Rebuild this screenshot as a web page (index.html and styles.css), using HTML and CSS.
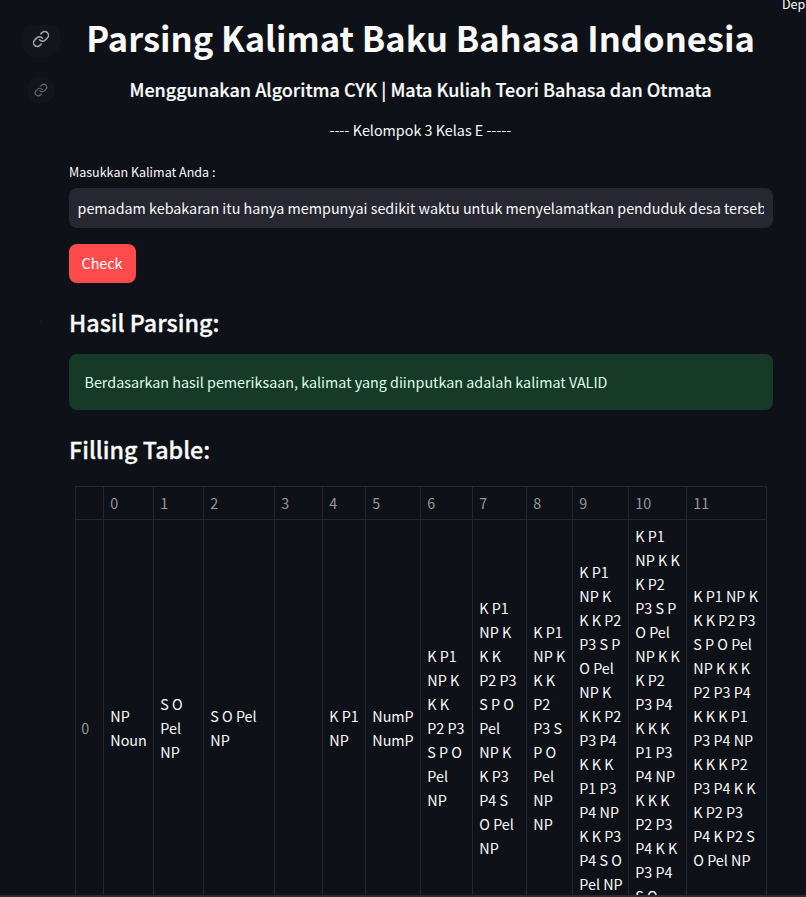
FILE: index.html
```html
<!DOCTYPE html>
<html lang="id">
<head>
<meta charset="utf-8">
<title>Parsing Kalimat Baku Bahasa Indonesia</title>
<link rel="stylesheet" href="styles.css">
</head>
<body>
<svg class="defs" width="0" height="0"><defs><symbol id="link" viewBox="0 0 24 24"><path d="M10 13a5 5 0 0 0 7.54.54l3-3a5 5 0 0 0-7.07-7.07l-1.72 1.71"/><path d="M14 11a5 5 0 0 0-7.54-.54l-3 3a5 5 0 0 0 7.07 7.07l1.71-1.71"/></symbol></defs></svg>
<div class="deploy">Dep</div>
<main>
<header class="row title-row"><span class="anchor large"><svg><use href="#link"/></svg></span><h1><span>Parsing Kalimat Baku Bahasa Indonesia</span></h1></header>
<div class="row sub-row"><span class="anchor small"><svg><use href="#link"/></svg></span><h4><span>Menggunakan Algoritma CYK | Mata Kuliah Teori Bahasa dan Otmata</span></h4></div>
<p class="group">---- Kelompok 3 Kelas E -----</p>
<label for="kalimat">Masukkan Kalimat Anda :</label>
<div class="field"><input id="kalimat" type="text" value="pemadam kebakaran itu hanya mempunyai sedikit waktu untuk menyelamatkan penduduk desa tersebut"></div>
<button type="button">Check</button>
<div class="row result-heading"><span class="anchor tiny"><svg><use href="#link"/></svg></span><h3>Hasil Parsing:</h3></div>
<div class="alert">Berdasarkan hasil pemeriksaan, kalimat yang diinputkan adalah kalimat VALID</div>
<h3 class="table-heading">Filling Table:</h3>
<table>
<colgroup><col class="c-index"><col class="c0"><col class="c1"><col class="c2"><col class="c3"><col class="c4"><col class="c5"><col class="c6"><col class="c7"><col class="c8"><col class="c9"><col class="c10"><col class="c11"></colgroup>
<thead><tr><th></th><th>0</th><th>1</th><th>2</th><th>3</th><th>4</th><th>5</th><th>6</th><th>7</th><th>8</th><th>9</th><th>10</th><th>11</th></tr></thead>
<tbody><tr>
<th>0</th>
<td>NP<br>Noun</td>
<td>S O<br>Pel<br>NP</td>
<td>S O Pel<br>NP</td>
<td></td>
<td>K P1<br>NP</td>
<td>NumP<br>NumP</td>
<td>K P1<br>NP K<br>K K<br>P2 P3<br>S P O<br>Pel<br>NP</td>
<td>K P1<br>NP K<br>K K<br>P2 P3<br>S P O<br>Pel<br>NP K<br>K P3<br>P4 S<br>O Pel<br>NP</td>
<td>K P1<br>NP K<br>K K<br>P2<br>P3 S<br>P O<br>Pel<br>NP<br>NP</td>
<td>K P1<br>NP K<br>K K P2<br>P3 S P<br>O Pel<br>NP K<br>K K P2<br>P3 P4<br>K K K<br>P1 P3<br>P4 NP<br>K K P3<br>P4 S O<br>Pel NP</td>
<td>K P1<br>NP K K<br>K P2<br>P3 S P<br>O Pel<br>NP K K<br>K P2<br>P3 P4<br>K K K<br>P1 P3<br>P4 NP<br>K K K<br>P2 P3<br>P4 K K<br>P3 P4<br>S O<br>Pel NP</td>
<td>K P1 NP K<br>K K P2 P3<br>S P O Pel<br>NP K K K<br>P2 P3 P4<br>K K K P1<br>P3 P4 NP<br>K K K P2<br>P3 P4 K K<br>K P2 P3<br>P4 K P2 S<br>O Pel NP</td>
</tr></tbody>
</table>
</main>
<footer></footer>
</body>
</html>
```
FILE: styles.css
```css
* { box-sizing: border-box; }
html { background: #0e1117; }
body {
  margin: 0;
  height: 897px;
  overflow: hidden;
  display: flex;
  flex-direction: column;
  position: relative;
  background: #0e1117;
  color: #fafafa;
  font-family: "Noto Sans CJK SC", "Noto Sans", sans-serif;
  font-size: 14.33px;
  line-height: 24px;
}
.defs { position: absolute; }
.deploy { position: absolute; left: 782px; top: -8px; font-size: 12.54px; }
main { height: 895px; overflow: hidden; padding: 0 33px 0 69px; }
footer { height: 2px; background: #2b2c31; }
.row { display: flex; align-items: center; margin-left: -48px; }
.row h1, .row h4 { flex: 1; margin: 0; text-align: center; white-space: nowrap; }
.title-row { height: 53px; margin-top: 12px; }
h1 { font-size: 34.5px; line-height: 51px; padding: 0 1px 2px 0; font-weight: 700; }
.sub-row { height: 24px; margin-top: 13px; }
h4 { font-size: 18px; line-height: 22px; padding: 0 1px 2px 0; font-weight: 500; -webkit-text-stroke: 0.2px #fafafa; }
.anchor {
  flex: none;
  display: flex;
  align-items: center;
  justify-content: center;
  border-radius: 50%;
  background: #12151b;
}
.anchor svg { fill: none; stroke: #a2a4a8; stroke-width: 2; stroke-linecap: round; stroke-linejoin: round; }
.large { width: 40px; height: 40px; margin-right: 8px; clip-path: inset(6px 0 0 0); }
.large svg { width: 18px; height: 18px; }
.small { width: 28px; height: 28px; margin: 0 14px 0 6px; }
.small svg { width: 14px; height: 14px; stroke: #66686d; }
.tiny { width: 4px; height: 4px; margin: 0 26px 0 18px; }
.tiny svg { width: 4px; height: 4px; stroke: #25282e; }
.group { margin: 16px 1px 0 0; text-align: center; }
label { display: block; margin-top: 20px; font-size: 12.54px; line-height: 20px; }
.field { height: 40px; margin-top: 6px; padding: 0 9px 0 8.5px; border-radius: 8px; background: #262730; }
input {
  display: block;
  width: 100%;
  height: 40px;
  padding: 0 0 2px;
  border: 0;
  outline: 0;
  background: transparent;
  color: #fafafa;
  font: inherit;
}
button {
  display: block;
  width: 67px;
  height: 39px;
  margin-top: 16px;
  padding: 0 1px 2px 0;
  border: 0;
  border-radius: 8px;
  background: #ff4b4b;
  color: #fff;
  font: inherit;
}
h3 { margin: 0; font-size: 23.3px; line-height: 34px; font-weight: 500; -webkit-text-stroke: 0.3px #fafafa; }
.result-heading { margin-top: 22px; }
.alert { height: 56px; margin-top: 15px; padding: 16px 16px 16px 15.5px; border-radius: 8px; background: #173928; color: #dffde9; }
.table-heading { margin-top: 22px; }
table {
  table-layout: fixed;
  width: 692px;
  margin: 20px 0 0 6px;
  border-spacing: 0;
  border: solid #26282d;
  border-width: 1px 0 0 1px;
}
.c-index { width: 28px; }
.c0, .c1 { width: 50px; }
.c2 { width: 71px; }
.c3 { width: 48px; }
.c4 { width: 43px; }
.c5 { width: 55px; }
.c6 { width: 52px; }
.c7 { width: 54px; }
.c8 { width: 46px; }
.c9 { width: 56px; }
.c10 { width: 58px; }
.c11 { width: 80px; }
th, td {
  padding: 4px 0 6px 6.3px;
  border: solid #26282d;
  border-width: 0 1px 1px 0;
  text-align: left;
  vertical-align: middle;
  white-space: nowrap;
  font-weight: 400;
}
th { color: #96989c; }
thead th { height: 33px; padding: 4px 0 4px 6.3px; }
tbody th { padding-left: 5.3px; }
```
